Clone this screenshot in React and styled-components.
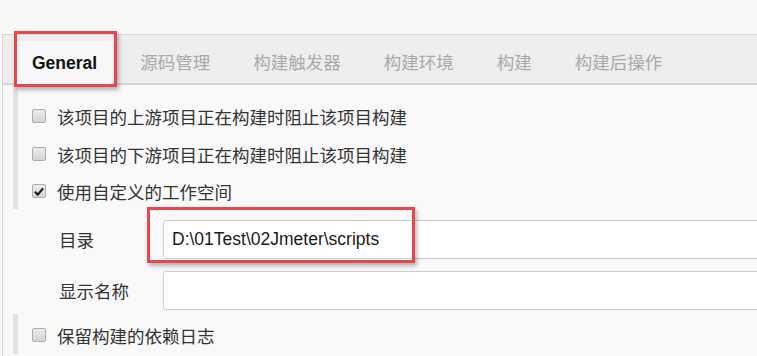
import React from 'react';
import styled, { createGlobalStyle } from 'styled-components';

const GlobalStyle = createGlobalStyle`
  html, body {
    margin: 0;
    padding: 0;
    background: #f8f8f6;
    overflow: hidden;
  }
  body {
    font-family: "Liberation Sans", "Noto Sans CJK SC", sans-serif;
  }
`;

const Page = styled.div`
  width: 757px;
  height: 356px;
  padding-top: 34px;
  box-sizing: border-box;
  overflow: hidden;
`;

const Panel = styled.div`
  margin-left: 2px;
  border-left: 1px solid #d6d6d6;
  height: 100%;
  background: #f9f9f9;
`;

const TabBar = styled.div`
  display: flex;
  align-items: flex-end;
  height: 48px;
  padding-left: 14px;
  background: #eeeeee;
  border-top: 1px solid #d9d9d9;
  border-bottom: 2px solid #d4d4d4;
`;

const TabWrap = styled.div`
  position: relative;
  margin-right: 13px;
`;

const Tab = styled.div`
  display: flex;
  align-items: center;
  height: 44px;
  padding: 0 15px;
  font-size: 17.5px;
  font-weight: ${p => (p.$active ? 700 : 400)};
  color: ${p => (p.$active ? '#111' : '#a9a9a9')};
  background: ${p => (p.$active ? '#f7f7f7' : 'transparent')};
  border-radius: 4px 4px 0 0;
  margin-bottom: ${p => (p.$active ? '-2px' : '0')};
`;

const Highlight = styled.div`
  position: absolute;
  left: ${p => p.$left}px;
  top: ${p => p.$top}px;
  width: ${p => p.$width}px;
  height: ${p => p.$height}px;
  box-sizing: border-box;
  border: 3px solid #e6464c;
  box-shadow: 2px 3px 4px rgba(0, 0, 0, 0.28);
  pointer-events: none;
`;

const Section = styled.div`
  margin-left: 10px;
  border-left: 5px solid #e2e2e2;
  padding: ${p => p.$pad || '0'};
  padding-left: 14px;
`;

const CheckRow = styled.label`
  display: flex;
  align-items: center;
  height: ${p => p.$h || 38}px;
  font-size: 17.5px;
  color: #333;
`;

const Box = styled.span`
  display: inline-flex;
  align-items: center;
  justify-content: center;
  width: 14px;
  height: 14px;
  box-sizing: border-box;
  border: 1px solid #adadad;
  border-radius: 2px;
  background: linear-gradient(#ececec, #d4d4d4);
  margin-right: 11px;
  flex-shrink: 0;
`;

const Fields = styled.div`
  display: flex;
  flex-direction: column;
  gap: 12px;
  padding: 11px 0 4px 56px;
`;

const FieldRow = styled.div`
  display: flex;
  align-items: center;
`;

const FieldLabel = styled.div`
  width: 104px;
  flex-shrink: 0;
  font-size: 17.5px;
  color: #333;
`;

const InputWrap = styled.div`
  position: relative;
  flex-shrink: 0;
`;

const Input = styled.div`
  width: 700px;
  height: 39px;
  box-sizing: border-box;
  border: 1px solid #cccccc;
  border-radius: 3px;
  background: #fff;
  padding-left: 8px;
  display: flex;
  align-items: center;
  font-size: 17.5px;
  color: #1a1a1a;
`;

const Checkbox = ({ checked }) => (
  <Box>
    {checked && (
      <svg width="10" height="9" viewBox="0 0 10 9">
        <path d="M1 4.8 L3.8 7.6 L9 1.4" stroke="#1e1e1e" strokeWidth="2.2" fill="none" />
      </svg>
    )}
  </Box>
);

const tabs = ['General', '源码管理', '构建触发器', '构建环境', '构建', '构建后操作'];

export default function App() {
  return (
    <Page>
      <GlobalStyle />
      <Panel>
        <TabBar>
          {tabs.map((t, i) => (
            <TabWrap key={t}>
              <Tab $active={i === 0}>{t}</Tab>
              {i === 0 && <Highlight $left={-3} $top={-10} $width={103} $height={56} />}
            </TabWrap>
          ))}
        </TabBar>
        <Section $pad="12px 0 0 0">
          <CheckRow>
            <Checkbox />
            该项目的上游项目正在构建时阻止该项目构建
          </CheckRow>
          <CheckRow>
            <Checkbox />
            该项目的下游项目正在构建时阻止该项目构建
          </CheckRow>
          <CheckRow $h={36}>
            <Checkbox checked />
            使用自定义的工作空间
          </CheckRow>
        </Section>
        <Fields>
          <FieldRow>
            <FieldLabel>目录</FieldLabel>
            <InputWrap>
              <Input>D:\01Test\02Jmeter\scripts</Input>
              <Highlight $left={-16} $top={-13} $width={268} $height={56} />
            </InputWrap>
          </FieldRow>
          <FieldRow>
            <FieldLabel>显示名称</FieldLabel>
            <InputWrap>
              <Input />
            </InputWrap>
          </FieldRow>
        </Fields>
        <Section $pad="2px 0 0 0">
          <CheckRow $h={38}>
            <Checkbox />
            保留构建的依赖日志
          </CheckRow>
        </Section>
      </Panel>
    </Page>
  );
}
